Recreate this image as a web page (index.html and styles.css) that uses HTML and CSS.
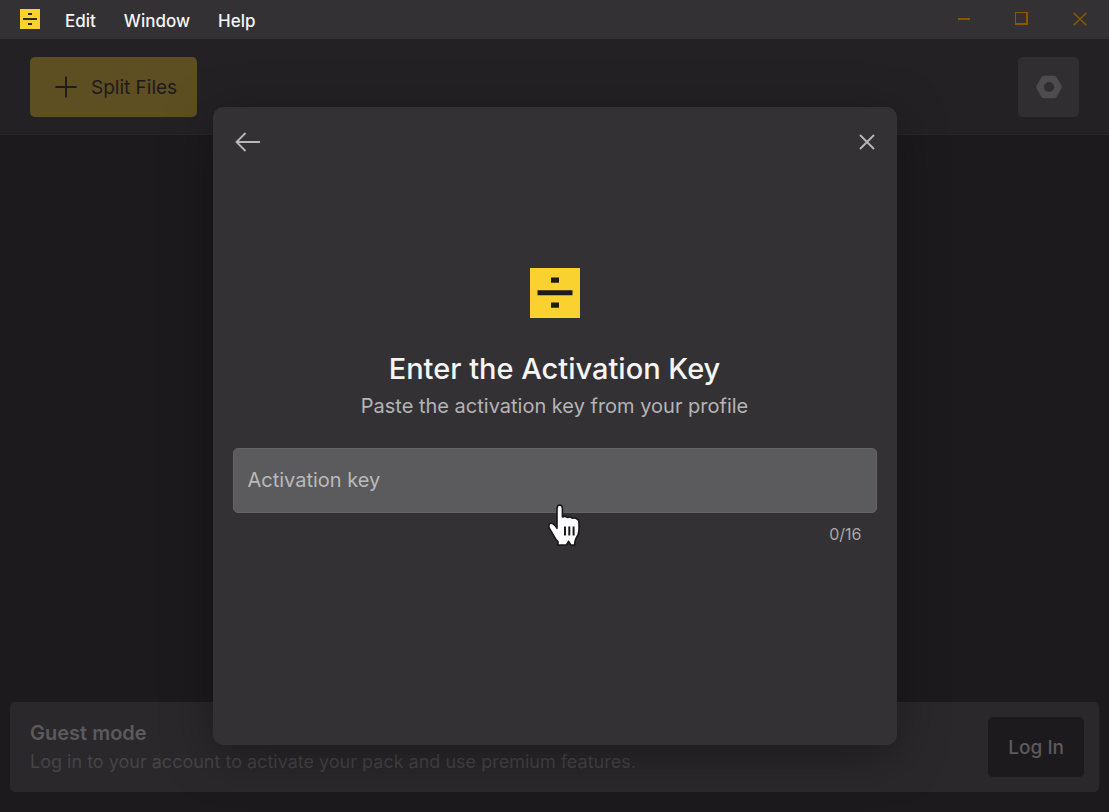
FILE: index.html
```html
<!DOCTYPE html>
<html lang="en">
<head>
<meta charset="utf-8">
<meta name="viewport" content="width=device-width, initial-scale=1">
<title>Enter the Activation Key</title>
<link rel="stylesheet" href="styles.css">
</head>
<body>
<div class="app">
  <header class="titlebar">
    <svg class="titlebar-logo" viewBox="0 0 20 20" aria-hidden="true">
      <rect width="20" height="20" fill="#f9d22f"/>
      <path d="M3 9h14v2H3zM8 4h4v2H8zM8 14h4v2H8z" fill="#302710"/>
    </svg>
    <nav class="menu" aria-label="Application menu">
      <button class="menu-item" type="button">Edit</button>
      <button class="menu-item" type="button">Window</button>
      <button class="menu-item" type="button">Help</button>
    </nav>
    <div class="window-controls">
      <button class="window-button" type="button" aria-label="Minimize">
        <svg viewBox="0 0 14 14"><path d="M1 6h12v2H1z" fill="#8a5703"/></svg>
      </button>
      <button class="window-button" type="button" aria-label="Maximize">
        <svg viewBox="0 0 14 14"><path d="M0 0h13v13H0zM1 1v10h10V1z" fill="#8a5703" fill-rule="evenodd"/></svg>
      </button>
      <button class="window-button" type="button" aria-label="Close window">
        <svg viewBox="0 0 14 14"><path d="M.7 .7l12.6 12.6M13.3 .7L.7 13.3" fill="none" stroke="#8a5703" stroke-width="1.4"/></svg>
      </button>
    </div>
  </header>

  <div class="workspace">
    <div class="toolbar">
      <button class="split-button" type="button">
        <svg class="plus-icon" viewBox="0 0 22 22" aria-hidden="true"><path d="M11 .5v21M.5 11h21" stroke="#1c1a1d" stroke-width="1.8"/></svg>
        Split Files
      </button>
      <button class="settings-button" type="button" aria-label="Settings">
        <svg class="nut-icon" viewBox="0 0 26 24"><path fill="#4c4b4e" fill-rule="evenodd" d="M7.8.7h10.4q1.5 0 2.3 1.2l4.9 8.5q.9 1.6 0 3.2l-4.9 8.5q-.8 1.2-2.3 1.2H7.8q-1.5 0-2.3-1.2L.6 13.6q-.9-1.6 0-3.2L5.5 1.9Q6.3.7 7.8.7zM13 6.9a5.1 5.1 0 1 0 0 10.2a5.1 5.1 0 1 0 0-10.2z"/></svg>
      </button>
    </div>

    <main class="canvas"></main>

    <footer class="guest-card">
      <div class="guest-text">
        <strong class="guest-title">Guest mode</strong>
        <span class="guest-note">Log in to your account to activate your pack and use premium features.</span>
      </div>
      <button class="login-button" type="button">Log In</button>
    </footer>

    <div class="overlay">
      <section class="dialog" role="dialog" aria-labelledby="dialog-title">
        <div class="dialog-bar">
          <button class="icon-button" type="button" aria-label="Back">
            <svg class="back-icon" viewBox="0 0 26 20"><path d="M25 10H1.5M10.5 1L1.5 10l9 9" fill="none" stroke="#b8b7b9" stroke-width="1.8"/></svg>
          </button>
          <button class="icon-button" type="button" aria-label="Close">
            <svg class="close-icon" viewBox="0 0 16 16"><path d="M1 1l14 14M15 1L1 15" fill="none" stroke="#b8b7b9" stroke-width="1.8"/></svg>
          </button>
        </div>
        <form class="dialog-body">
          <svg class="brand-logo" viewBox="0 0 50 50" aria-hidden="true">
            <rect width="50" height="50" fill="#f9d22f"/>
            <path d="M7.5 22.3h35v5h-35zM21 9.5h8v5.3h-8zM21 34.5h8v5.3h-8z" fill="#1c1b1d"/>
          </svg>
          <h1 class="dialog-title" id="dialog-title">Enter the Activation Key</h1>
          <p class="dialog-subtitle">Paste the activation key from your profile</p>
          <div class="key-field">
            <input class="key-input" type="text" maxlength="16" aria-label="Activation key" placeholder="Activation key">
            <svg class="pointer" viewBox="0 0 32 42" aria-hidden="true">
              <path d="M9 4.5q0-3.5 2.7-3.5t2.7 3.5V13q2.6-1.5 5.1.4q2.6-1.2 4.7.8q3.2-1 4.7.9q2.1.3 2.1 3.6v7q0 5-3 8.500l-1.200 4V41h-4l-2.200-3.700-2.200 3.700H10v-3.500Q7.500 35.500 6 32.200L1.200 24Q.2 20 2.500 19.300q3-.3 6.500 5z" fill="#fff" stroke="#19181a" stroke-width="1.6" stroke-linejoin="round"/>
              <path d="M17 22.5V31.5M21.3 22.5V31.5M25.6 22.5V31.5" stroke="#19181a" stroke-width="2"/>
            </svg>
          </div>
          <output class="key-count">0/16</output>
        </form>
      </section>
    </div>
  </div>
</div>
</body>
</html>
```

FILE: styles.css
```css
* {
  box-sizing: border-box;
}

body {
  margin: 0;
  background: #1c1a1d;
  color: #f5f5f5;
  font-family: Inter, "Liberation Sans", sans-serif;
  font-size: 20px;
}

button,
input {
  margin: 0;
  border: 0;
  padding: 0;
  background: none;
  color: inherit;
  font: inherit;
}

svg {
  display: block;
}

.app {
  display: flex;
  flex-direction: column;
  min-height: 100vh;
}

.titlebar {
  display: flex;
  align-items: center;
  height: 39px;
  padding: 0 22px 1px 20px;
  background: #333134;
}

.titlebar-logo {
  width: 20px;
  height: 20px;
}

.menu {
  display: flex;
  gap: 28px;
  margin-left: 25px;
  padding-top: 4px;
}

.menu-item {
  font-size: 17px;
  line-height: 24px;
  font-weight: 500;
}

.window-controls {
  display: flex;
  gap: 44px;
  margin-left: auto;
}

.window-button svg {
  width: 14px;
  height: 14px;
}

.workspace {
  position: relative;
  display: flex;
  flex: 1;
  flex-direction: column;
}

.toolbar {
  display: flex;
  justify-content: space-between;
  padding: 18px 30px 17px;
  border-bottom: 1px solid #29272a;
  background: #232124;
}

.split-button {
  display: flex;
  align-items: center;
  gap: 14px;
  height: 60px;
  padding: 0 20px 0 25px;
  border-radius: 5px;
  background: #5e4f22;
  color: #1c1a1d;
  font-size: 19px;
}

.plus-icon {
  width: 22px;
  height: 22px;
}

.settings-button {
  display: grid;
  place-items: center;
  width: 61px;
  height: 60px;
  border-radius: 5px;
  background: #302e31;
}

.nut-icon {
  width: 26px;
  height: 24px;
}

.canvas {
  flex: 1;
}

.guest-card {
  display: flex;
  align-items: center;
  justify-content: space-between;
  margin: 0 10px 20px;
  padding: 15px 15px 15px 20px;
  border-radius: 5px;
  background: #2a282b;
}

.guest-text {
  display: flex;
  flex-direction: column;
  gap: 4px;
}

.guest-title {
  color: #5b5a5c;
  font-weight: 600;
  line-height: 26px;
}

.guest-note {
  color: #454446;
  font-size: 18px;
  line-height: 24px;
}

.login-button {
  height: 60px;
  padding: 0 20px;
  border-radius: 5px;
  background: #1c1a1d;
  color: #5b5a5c;
  font-size: 19px;
  font-weight: 500;
}

.overlay {
  position: absolute;
  inset: 0;
  display: grid;
  place-items: center;
}

.dialog {
  width: 684px;
  max-width: 100%;
  padding: 20px 20px 200px;
  border-radius: 10px;
  background: #333134;
  box-shadow: 0 10px 50px rgba(0, 0, 0, 0.35);
}

.dialog-bar {
  display: flex;
  justify-content: space-between;
}

.icon-button {
  display: grid;
  place-items: center;
  height: 30px;
  padding: 0 2px;
}

.back-icon {
  width: 26px;
  height: 20px;
}

.close-icon {
  width: 16px;
  height: 16px;
}

.dialog-body {
  display: flex;
  flex-direction: column;
  align-items: center;
  padding-top: 111px;
}

.brand-logo {
  width: 50px;
  height: 50px;
}

.dialog-title {
  margin: 32px 0 0;
  font-size: 29px;
  line-height: 38px;
  font-weight: 500;
}

.dialog-subtitle {
  margin: 4px 0 0;
  color: #b5b4b6;
  line-height: 28px;
}

.key-field {
  position: relative;
  width: 100%;
  margin-top: 28px;
}

.key-input {
  width: 100%;
  height: 65px;
  padding: 0 14px;
  border: 1px solid #656567;
  border-radius: 5px;
  background: #5b5b5d;
}

.key-input::placeholder {
  color: #bababb;
  opacity: 1;
}

.pointer {
  position: absolute;
  top: 56px;
  left: 49%;
  width: 32px;
  height: 42px;
}

.key-count {
  align-self: flex-end;
  margin: 10px 15px 0;
  color: #a9a8aa;
  font-size: 16px;
  line-height: 22px;
}
```
